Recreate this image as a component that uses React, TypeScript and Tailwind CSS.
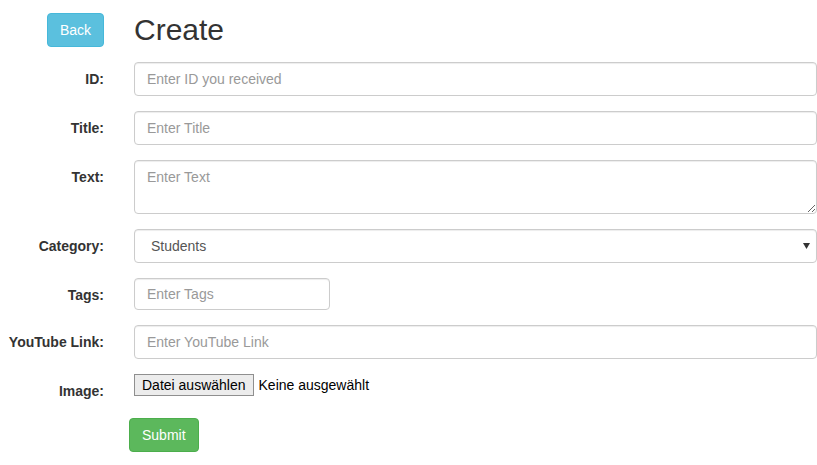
import { useState } from "react";

const fieldClass =
  "h-[34px] w-full rounded-[4px] border border-[#ccc] bg-white px-3 text-[14px] text-[#555] shadow-[inset_0_1px_1px_rgba(0,0,0,0.075)] outline-none placeholder:text-[#999]";

function Row({ label, children, className = "mb-[15px]" }: { label: string; children: React.ReactNode; className?: string }) {
  return (
    <div className={`flex ${className}`}>
      <label className="w-[119px] shrink-0 pr-[15px] pt-[7px] text-right text-[14px] font-bold leading-5 text-[#333]">
        {label}
      </label>
      <div className="min-w-0 flex-1 pl-[15px]">{children}</div>
    </div>
  );
}

export default function App() {
  const [category, setCategory] = useState("Students");

  return (
    <div className="min-h-[465px] w-[817px] bg-white font-['Liberation_Sans',Arial,sans-serif] text-[#333]">
      <div className="flex pt-[13px] mb-[15px]">
        <div className="flex w-[119px] shrink-0 justify-end pr-[15px]">
          <button className="h-[34px] rounded-[4px] border border-[#46b8da] bg-[#5bc0de] px-3 text-[14px] leading-5 text-white">
            Back
          </button>
        </div>
        <h2 className="pl-[15px] text-[30px] font-normal leading-[33px] text-[#333]">Create</h2>
      </div>

      <Row label="ID:">
        <input className={fieldClass} placeholder="Enter ID you received" />
      </Row>
      <Row label="Title:">
        <input className={fieldClass} placeholder="Enter Title" />
      </Row>
      <Row label="Text:">
        <textarea
          className={`${fieldClass} block h-[54px] py-[6px] leading-5`}
          placeholder="Enter Text"
        />
      </Row>
      <Row label="Category:">
        <div className="relative">
          <select
            value={category}
            onChange={(e) => setCategory(e.target.value)}
            className={`${fieldClass} appearance-none pl-4 text-[#555]`}
          >
            <option>Students</option>
            <option>Teachers</option>
            <option>Other</option>
          </select>
          <svg
            className="pointer-events-none absolute right-[7px] top-[14px]"
            width="7"
            height="6"
            viewBox="0 0 7 6"
          >
            <path d="M0 0h7L3.5 6z" fill="#333" />
          </svg>
        </div>
      </Row>
      <Row label="Tags:">
        <input className={`${fieldClass} !h-[32px] !w-[196px]`} placeholder="Enter Tags" />
      </Row>
      <Row label="YouTube Link:">
        <input className={fieldClass} placeholder="Enter YouTube Link" />
      </Row>
      <Row label="Image:" className="mb-[17px]">
        <div className="flex items-center text-[14px] text-black">
          <button className="h-[22px] border border-[#8f8f8f] bg-[#ececec] px-[7px] leading-5 text-black">
            Datei auswählen
          </button>
          <span className="ml-[5px]">Keine ausgewählt</span>
        </div>
      </Row>

      <div className="pl-[129px]">
        <button className="h-[34px] rounded-[4px] border border-[#4cae4c] bg-[#5cb85c] px-3 text-[14px] leading-5 text-white">
          Submit
        </button>
      </div>
    </div>
  );
}
